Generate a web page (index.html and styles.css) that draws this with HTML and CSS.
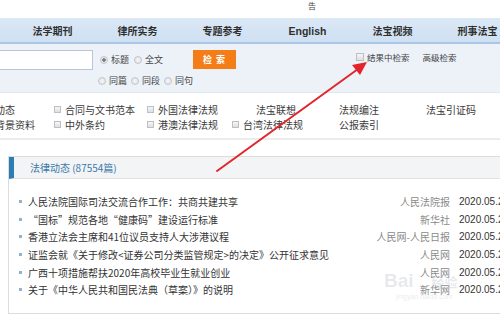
FILE: index.html
```html
<!DOCTYPE html>
<html lang="zh-CN">
<head>
<meta charset="utf-8">
<title>北大法宝</title>
<link rel="stylesheet" href="styles.css">
</head>
<body>
<div class="page">
  <div class="topstrip"><span class="ad">告</span></div>

  <nav class="nav">
    <a class="nav-item">法学期刊</a>
    <a class="nav-item">律所实务</a>
    <a class="nav-item">专题参考</a>
    <a class="nav-item en">English</a>
    <a class="nav-item">法宝视频</a>
    <a class="nav-item">刑事法宝</a>
  </nav>

  <div class="search">
    <div class="query"></div>
    <div class="opts">
      <div class="opt-row">
        <label class="opt"><i class="rd on"></i>标题</label>
        <label class="opt"><i class="rd"></i>全文</label>
      </div>
      <div class="opt-row second">
        <label class="opt"><i class="rd"></i>同篇</label>
        <label class="opt"><i class="rd"></i>同段</label>
        <label class="opt"><i class="rd"></i>同句</label>
      </div>
    </div>
    <button class="go">检 索</button>
    <div class="extra">
      <label class="opt"><i class="cb"></i>结果中检索</label>
      <a class="adv">高级检索</a>
    </div>
  </div>

  <div class="cats">
    <label class="cat"><i class="cb"></i>法律动态</label>
    <label class="cat"><i class="cb"></i>合同与文书范本</label>
    <label class="cat"><i class="cb"></i>外国法律法规</label>
    <a class="cat link indent">法宝联想</a>
    <a class="cat link">法规编注</a>
    <a class="cat link">法宝引证码</a>

    <label class="cat"><i class="cb"></i>立法背景资料</label>
    <label class="cat"><i class="cb"></i>中外条约</label>
    <label class="cat"><i class="cb"></i>港澳法律法规</label>
    <label class="cat"><i class="cb"></i>台湾法律法规</label>
    <a class="cat link">公报索引</a>
    <span class="cat"></span>
  </div>

  <section class="panel">
    <h2 class="panel-head">法律动态 (87554篇)</h2>
    <ul class="news">
      <li class="item"><span class="title">人民法院国际司法交流合作工作：共商共建共享</span><span class="src">人民法院报</span><span class="date">2020.05.22</span></li>
      <li class="item"><span class="title">“国标”规范各地“健康码”建设运行标准</span><span class="src">新华社</span><span class="date">2020.05.22</span></li>
      <li class="item"><span class="title">香港立法会主席和41位议员支持人大涉港议程</span><span class="src">人民网-人民日报</span><span class="date">2020.05.22</span></li>
      <li class="item"><span class="title">证监会就《关于修改&lt;证券公司分类监管规定&gt;的决定》公开征求意见</span><span class="src">人民网</span><span class="date">2020.05.22</span></li>
      <li class="item"><span class="title">广西十项措施帮扶2020年高校毕业生就业创业</span><span class="src">人民网</span><span class="date">2020.05.22</span></li>
      <li class="item"><span class="title">关于《中华人民共和国民法典（草案）》的说明</span><span class="src">新华网</span><span class="date">2020.05.22</span></li>
    </ul>
  </section>
</div>

<svg class="arrow" width="500" height="317" viewBox="0 0 500 317" aria-hidden="true">
  <line x1="217" y1="171" x2="358" y2="69" stroke="#e3252b" stroke-width="2" stroke-linecap="round"/>
  <polygon points="367,62 360,75 352,65" fill="#e3252b"/>
</svg>

<div class="watermark">
  <span class="wm-big">Bai<span class="wm-cn">经验</span></span>
  <span class="wm-small">jingyan.baidu.com</span>
</div>
</body>
</html>
```

FILE: styles.css
```css
html, body {
  margin: 0;
  padding: 0;
  overflow: hidden;
  background: #ffffff;
}

body {
  font-family: "Noto Sans CJK SC", "Liberation Sans", sans-serif;
  color: #333333;
  font-size: 10px;
  width: 500px;
  height: 317px;
  position: relative;
}

.page {
  width: 560px;
}

/* top strip */
.topstrip {
  height: 18px;
  padding-left: 308px;
  box-sizing: border-box;
}

.ad {
  display: block;
  font-size: 8px;
  line-height: 9px;
  padding-top: 1px;
  color: #444;
}

/* navigation */
.nav {
  display: flex;
  height: 24px;
  padding-left: 10px;
  background: linear-gradient(#dbe8f6, #cfe0f2);
  border-bottom: 2px solid #a9c6e6;
}

.nav-item {
  width: 85px;
  text-align: center;
  line-height: 26px;
  font-size: 10px;
  font-weight: bold;
  color: #2f2f2f;
}

.nav-item.en {
  font-family: "Liberation Sans", sans-serif;
  font-size: 10.5px;
}

/* search */
.search {
  display: flex;
  align-items: flex-start;
  height: 49px;
  box-sizing: border-box;
  padding-top: 6px;
  margin-left: -10px;
  background: #edf2f9;
  border-bottom: 1px solid #e1e7ef;
}

.query {
  width: 101px;
  height: 18px;
  background: #ffffff;
  border: 1px solid #b9c6d6;
}

.opts {
  width: 95px;
  margin-left: 5px;
  padding-top: 4px;
  display: flex;
  flex-direction: column;
  gap: 9px;
}

.opt-row {
  display: flex;
  height: 12px;
  padding-left: 2px;
  white-space: nowrap;
}

.opt-row.second {
  padding-left: 0;
}

.opt {
  display: flex;
  align-items: center;
  gap: 3px;
  margin-right: 5px;
  font-size: 9px;
  line-height: 12px;
  color: #444;
  white-space: nowrap;
  flex: none;
}

.opt-row.second .opt {
  margin-right: 4px;
}

.rd {
  display: inline-block;
  width: 6px;
  height: 6px;
  border-radius: 50%;
  border: 1px solid #c2c6cc;
  background: radial-gradient(#f4f5f7, #dcdfe3);
  flex: none;
}

.rd.on {
  background: radial-gradient(#7a7f86 0 1.5px, #e6e8eb 2px);
}

.cb {
  display: inline-block;
  width: 6px;
  height: 6px;
  border: 1px solid #bcbfc4;
  background: linear-gradient(#f6f6f6, #dedfe2);
  flex: none;
}

.go {
  width: 43px;
  height: 19px;
  padding: 0;
  margin-left: 0;
  border: none;
  background: #f47d17;
  color: #ffffff;
  font-family: "Noto Sans CJK SC", sans-serif;
  font-size: 9px;
  font-weight: bold;
  letter-spacing: 1px;
}

.extra {
  display: flex;
  align-items: center;
  margin-left: 120px;
  padding-top: 1px;
  font-size: 8.5px;
}

.extra .opt {
  font-size: 8.5px;
  margin-right: 13px;
}

.adv {
  color: #444;
  line-height: 12px;
}

/* categories */
.cats {
  display: grid;
  grid-template-columns: 90px 93px 85px 107px 87px 1fr;
  margin-left: -36px;
  padding: 9px 0 6px;
  border-bottom: 2px solid #ececec;
}

.cat {
  display: flex;
  align-items: center;
  gap: 4px;
  height: 15px;
  font-size: 10px;
  color: #3a3a3a;
  white-space: nowrap;
}

.cat .cb {
  width: 5px;
  height: 5px;
}

.cat.indent {
  padding-left: 24px;
}

/* panel */
.panel {
  margin: 16px 0 0 8px;
  height: 158px;
  box-sizing: border-box;
  border: 1px solid #dcdcdc;
  border-right: none;
  background: #ffffff;
}

.panel-head {
  margin: 0;
  height: 22px;
  line-height: 22px;
  box-sizing: border-box;
  padding-left: 16px;
  background: #f3f4f6;
  border-left: 5px solid #2d7db5;
  border-bottom: 1px solid #e2e3e6;
  font-size: 10px;
  font-weight: normal;
  color: #3b78a8;
}

.news {
  list-style: none;
  margin: 0;
  padding: 14px 0 0 10px;
}

.item {
  display: flex;
  align-items: center;
  height: 17.6px;
  font-size: 10px;
}

.item::before {
  content: "";
  width: 3px;
  height: 3px;
  margin-right: 6px;
  background: #8fb2cf;
  flex: none;
}

.title {
  flex: 1;
  color: #333;
  white-space: nowrap;
}

.src {
  color: #8a8a8a;
  white-space: nowrap;
}

.date {
  width: 101px;
  margin-left: 9px;
  font-family: "Liberation Sans", sans-serif;
  color: #333;
}

/* overlays */
.arrow {
  position: absolute;
  left: 0;
  top: 0;
  pointer-events: none;
}

.watermark {
  position: absolute;
  left: 384px;
  top: 271px;
  display: flex;
  flex-direction: column;
  pointer-events: none;
  color: rgba(170, 175, 185, 0.28);
}

.wm-big {
  font-family: "Liberation Sans", sans-serif;
  font-size: 19px;
  font-weight: bold;
  line-height: 20px;
}

.wm-cn {
  font-family: "Noto Sans CJK SC", sans-serif;
  font-size: 13px;
  margin-left: 18px;
}

.wm-small {
  font-family: "Liberation Sans", sans-serif;
  font-size: 7px;
  margin-left: 12px;
  line-height: 9px;
}
```
